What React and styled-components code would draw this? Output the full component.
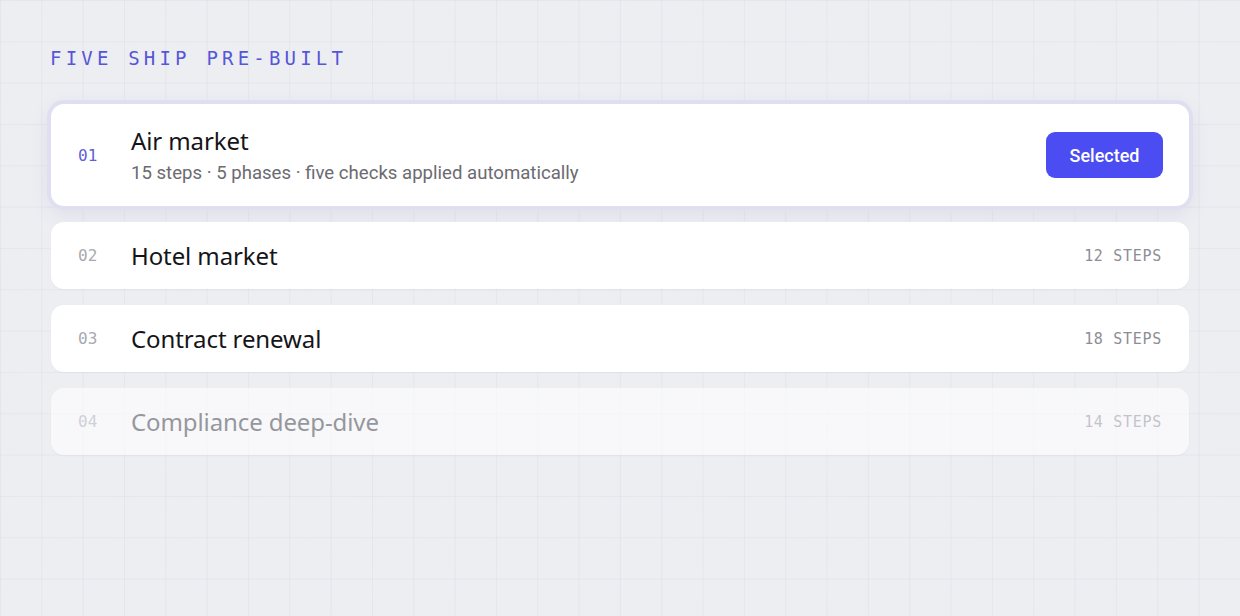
import styled, { createGlobalStyle } from "styled-components";

const GlobalStyle = createGlobalStyle`
  html, body {
    margin: 0;
    padding: 0;
    min-height: 100%;
  }
  body {
    min-height: 616px;
    background-color: #edeef2;
    background-image:
      linear-gradient(to right, rgba(40, 40, 80, 0.04) 1px, transparent 1px),
      linear-gradient(to bottom, rgba(40, 40, 80, 0.04) 1px, transparent 1px);
    background-size: calc(100vw / 30) calc(100vw / 30);
    font-family: "Roboto", "Liberation Sans", sans-serif;
  }
`;

const Page = styled.div`
  padding: 47px 51px 40px;
  display: flex;
  flex-direction: column;
`;

const Heading = styled.h2`
  margin: 0 0 35px 0;
  font-family: "DejaVu Sans Mono", "Liberation Mono", monospace;
  font-weight: 400;
  font-size: 19px;
  letter-spacing: 4.2px;
  line-height: 22px;
  color: #5656d8;
  transform: translateX(-1px);
`;

const List = styled.div`
  display: flex;
  flex-direction: column;
  gap: 16px;
`;

const Card = styled.div`
  display: flex;
  align-items: center;
  padding: ${(p) => (p.$selected ? "21px 26px 21px 27px" : "18px 27px")};
  border-radius: 13px;
  background: ${(p) => (p.$faded ? "rgba(255, 255, 255, 0.6)" : "#ffffff")};
  box-shadow: ${(p) =>
    p.$selected
      ? "0 0 0 4px #dfdff1, 0 6px 22px rgba(70, 70, 140, 0.10)"
      : "0 1px 2px rgba(40, 40, 80, 0.03)"};
`;

const Num = styled.span`
  width: 53px;
  flex-shrink: 0;
  font-family: "DejaVu Sans Mono", "Liberation Mono", monospace;
  font-size: 16px;
  color: ${(p) => (p.$selected ? "#5f5fd9" : p.$faded ? "#cfd0d6" : "#a9a9ae")};
`;

const Body = styled.div`
  flex: 1;
  display: flex;
  flex-direction: column;
  min-width: 0;
`;

const Title = styled.div`
  font-family: "Noto Sans", "Open Sans", sans-serif;
  font-size: 24px;
  line-height: 31px;
  font-weight: 400;
  letter-spacing: -0.1px;
  color: ${(p) => (p.$faded ? "#96979d" : "#151519")};
`;

const Sub = styled.div`
  margin-top: 6px;
  font-family: "Roboto", "Liberation Sans", sans-serif;
  font-size: 18.6px;
  line-height: 23px;
  color: #6b6b70;
`;

const Steps = styled.span`
  font-family: "DejaVu Sans Mono", "Liberation Mono", monospace;
  font-size: 15px;
  letter-spacing: 0.7px;
  color: ${(p) => (p.$faded ? "#c3c4ca" : "#8d8d93")};
`;

const SelectedButton = styled.button`
  border: none;
  width: 117px;
  height: 46px;
  border-radius: 9px;
  background: #4b4cf2;
  color: #ffffff;
  font-family: "Roboto", "Liberation Sans", sans-serif;
  font-size: 18px;
  font-weight: 500;
  cursor: pointer;
`;

const items = [
  {
    n: "01",
    title: "Air market",
    sub: "15 steps · 5 phases · five checks applied automatically",
    selected: true,
  },
  { n: "02", title: "Hotel market", steps: "12 STEPS" },
  { n: "03", title: "Contract renewal", steps: "18 STEPS" },
  { n: "04", title: "Compliance deep-dive", steps: "14 STEPS", faded: true },
];

export default function App() {
  return (
    <>
      <GlobalStyle />
      <Page>
        <Heading>FIVE SHIP PRE-BUILT</Heading>
        <List>
          {items.map((it) => (
            <Card key={it.n} $selected={it.selected} $faded={it.faded}>
              <Num $selected={it.selected} $faded={it.faded}>
                {it.n}
              </Num>
              <Body>
                <Title $faded={it.faded}>{it.title}</Title>
                {it.sub && <Sub>{it.sub}</Sub>}
              </Body>
              {it.selected ? (
                <SelectedButton>Selected</SelectedButton>
              ) : (
                <Steps $faded={it.faded}>{it.steps}</Steps>
              )}
            </Card>
          ))}
        </List>
      </Page>
    </>
  );
}
